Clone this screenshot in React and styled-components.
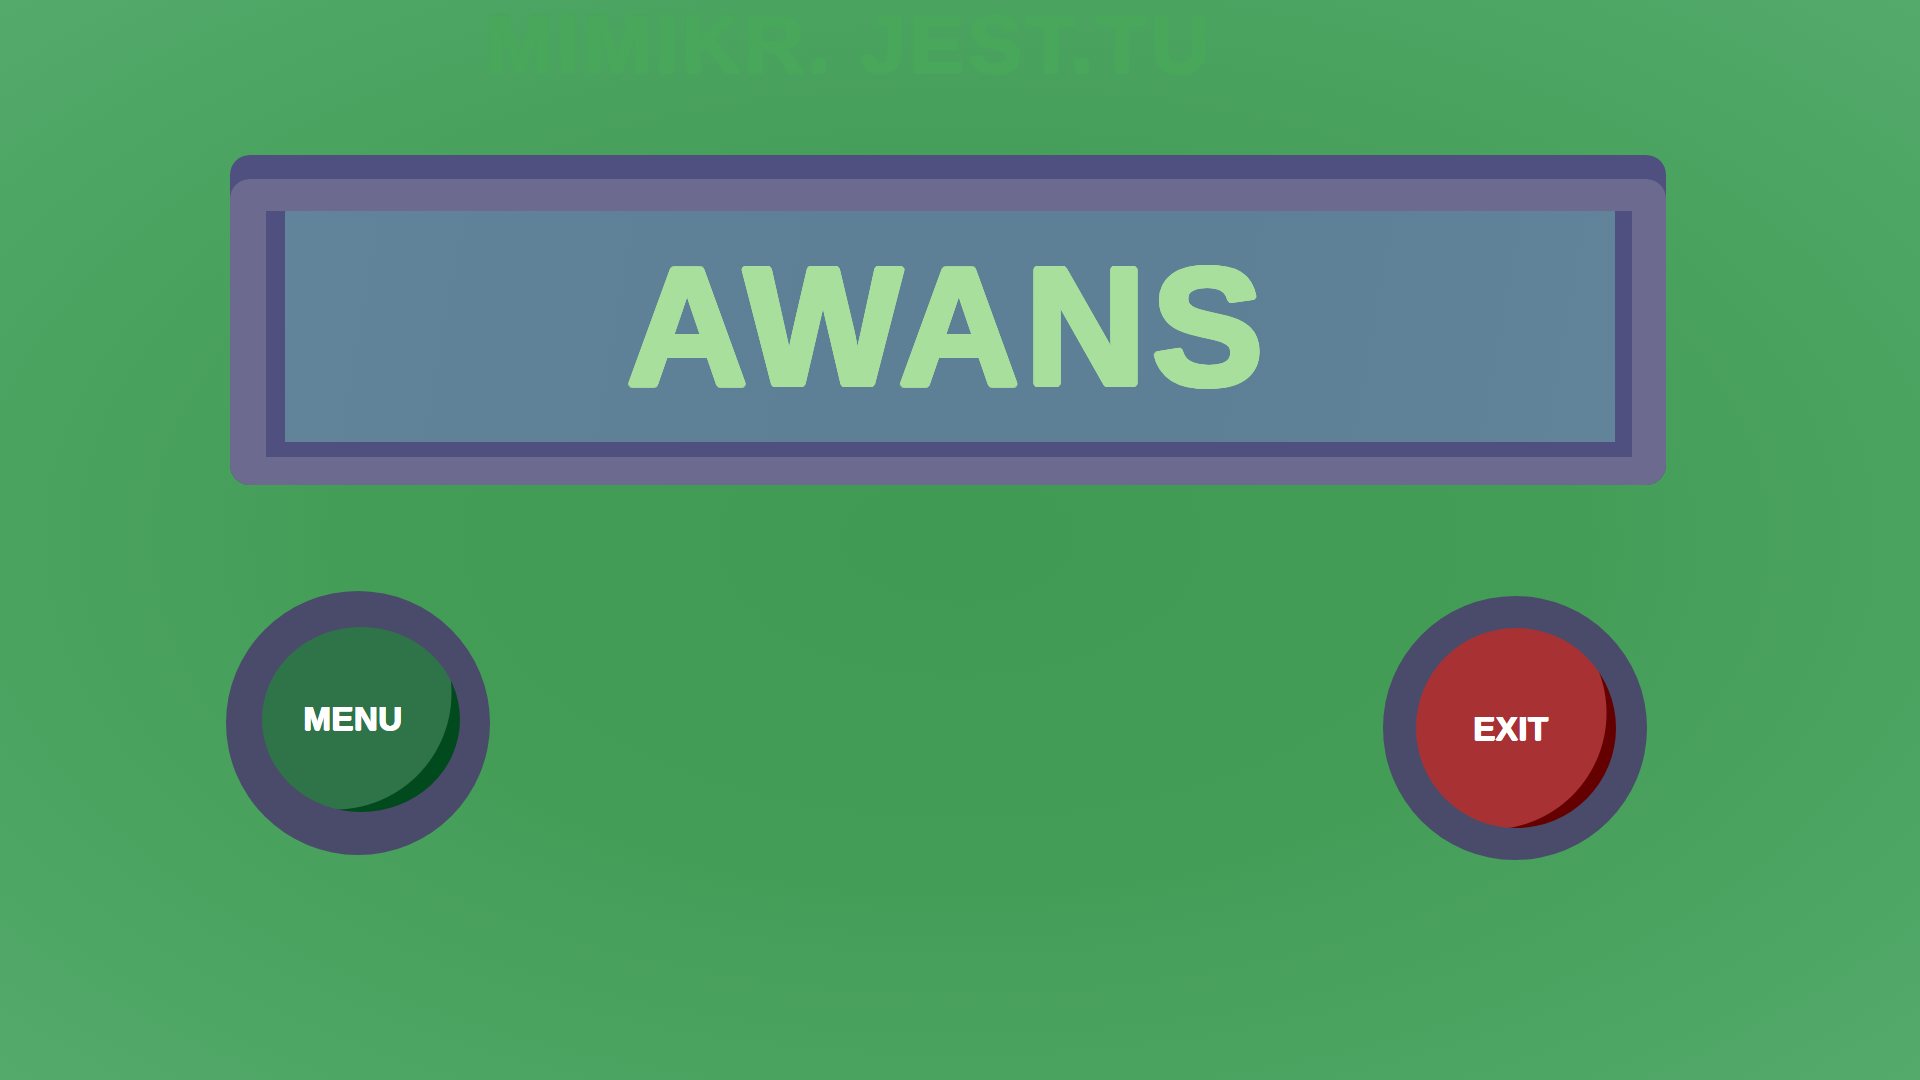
import React from 'react';
import styled, { createGlobalStyle } from 'styled-components';

// thickens glyphs with round corners, close to the rounded face in the mockup
const dilate = (r, color, steps = 16) =>
  Array.from({ length: steps }, (_, i) => {
    const a = (i / steps) * Math.PI * 2;
    return `${(Math.cos(a) * r).toFixed(2)}px ${(Math.sin(a) * r).toFixed(2)}px 0 ${color}`;
  }).join(', ');

const GlobalStyle = createGlobalStyle`
  html, body {
    margin: 0;
    padding: 0;
  }
  body {
    font-family: "Liberation Sans", Arial, sans-serif;
    overflow: hidden;
  }
`;

const Page = styled.div`
  width: 1920px;
  height: 1080px;
  box-sizing: border-box;
  padding: 1px 0 0 230px;
  display: flex;
  flex-direction: column;
  background: radial-gradient(ellipse farthest-corner at 50% 50%, #419a54 0%, #449d57 45%, #53aa6b 100%);
`;

const Title = styled.h1`
  margin: 0;
  padding-left: 255px;
  font-family: "Liberation Sans", Arial, sans-serif;
  font-weight: 700;
  font-size: 82px;
  line-height: 85px;
  letter-spacing: 3.6px;
  color: #48a75b;
  text-shadow: ${dilate(1.5, '#48a75b', 12)};
  white-space: nowrap;
`;

const Panel = styled.div`
  margin-top: 69px;
  width: 1436px;
  padding-top: 24px;
  background: #4f4f80;
  border-radius: 20px;
`;

const Frame = styled.div`
  background: #6c6a8e;
  border-radius: 20px;
  padding: 32px 34px 28px 36px;
`;

const Bezel = styled.div`
  border-style: solid;
  border-color: #4f4f80;
  border-width: 0 17px 15px 19px;
`;

const Screen = styled.div`
  height: 231px;
  display: flex;
  align-items: center;
  justify-content: center;
  padding-right: 4px;
  background: linear-gradient(100deg, #62849a 0%, #5e8096 40%, #5e8096 70%, #62849a 100%);
`;

const Word = styled.span`
  font-family: "Liberation Sans", Arial, sans-serif;
  font-weight: 700;
  font-size: 167px;
  line-height: 1;
  letter-spacing: 6px;
  color: #a8df9d;
  text-shadow: ${dilate(3, '#a8df9d')};
`;

const ButtonRow = styled.div`
  margin: 106px 0 0 -4px;
  width: 1421px;
  display: flex;
  justify-content: space-between;
  align-items: flex-start;
`;

const Ring = styled.div`
  width: 264px;
  height: 264px;
  margin-top: ${p => p.$drop || 0}px;
  border-radius: 50%;
  background: #4a4a6a;
  display: flex;
  align-items: center;
  justify-content: center;
`;

const Face = styled.button`
  width: ${p => p.$w}px;
  height: ${p => p.$h}px;
  border: none;
  border-radius: 50%;
  margin: 0;
  padding: ${p => p.$textDrop}px ${p => p.$textShift * 2}px 0 0;
  transform: translate(${p => p.$dx}px, ${p => p.$dy}px);
  background: radial-gradient(
    circle ${p => p.$r}px at ${p => p.$cx}px ${p => p.$cy}px,
    ${p => p.$face} ${p => p.$r - 1}px,
    ${p => p.$shade} ${p => p.$r}px
  );
  color: #ffffff;
  font-family: "Liberation Sans", Arial, sans-serif;
  font-weight: 700;
  font-size: 33px;
  letter-spacing: 0.5px;
  text-shadow: ${dilate(0.5, '#ffffff', 8)};
  cursor: pointer;
  display: flex;
  align-items: center;
  justify-content: center;
`;

const App = () => {
  return (
    <>
      <GlobalStyle />
      <Page>
        <Title>MIMIKR. JEST.TU</Title>

        <Panel>
          <Frame>
            <Bezel>
              <Screen>
                <Word>AWANS</Word>
              </Screen>
            </Bezel>
          </Frame>
        </Panel>

        <ButtonRow>
          <Ring>
            <Face
              $w={198}
              $h={185}
              $dx={3}
              $dy={-4}
              $r={117}
              $cx={73}
              $cy={66}
              $face="#2f7449"
              $shade="#004a1d"
              $textShift={8}
              $textDrop={0}
            >
              MENU
            </Face>
          </Ring>
          <Ring $drop={5}>
            <Face
              $w={200}
              $h={200}
              $dx={1}
              $dy={0}
              $r={117}
              $cx={74}
              $cy={85}
              $face="#a83233"
              $shade="#650000"
              $textShift={5}
              $textDrop={2}
            >
              EXIT
            </Face>
          </Ring>
        </ButtonRow>
      </Page>
    </>
  );
};

export default App;
